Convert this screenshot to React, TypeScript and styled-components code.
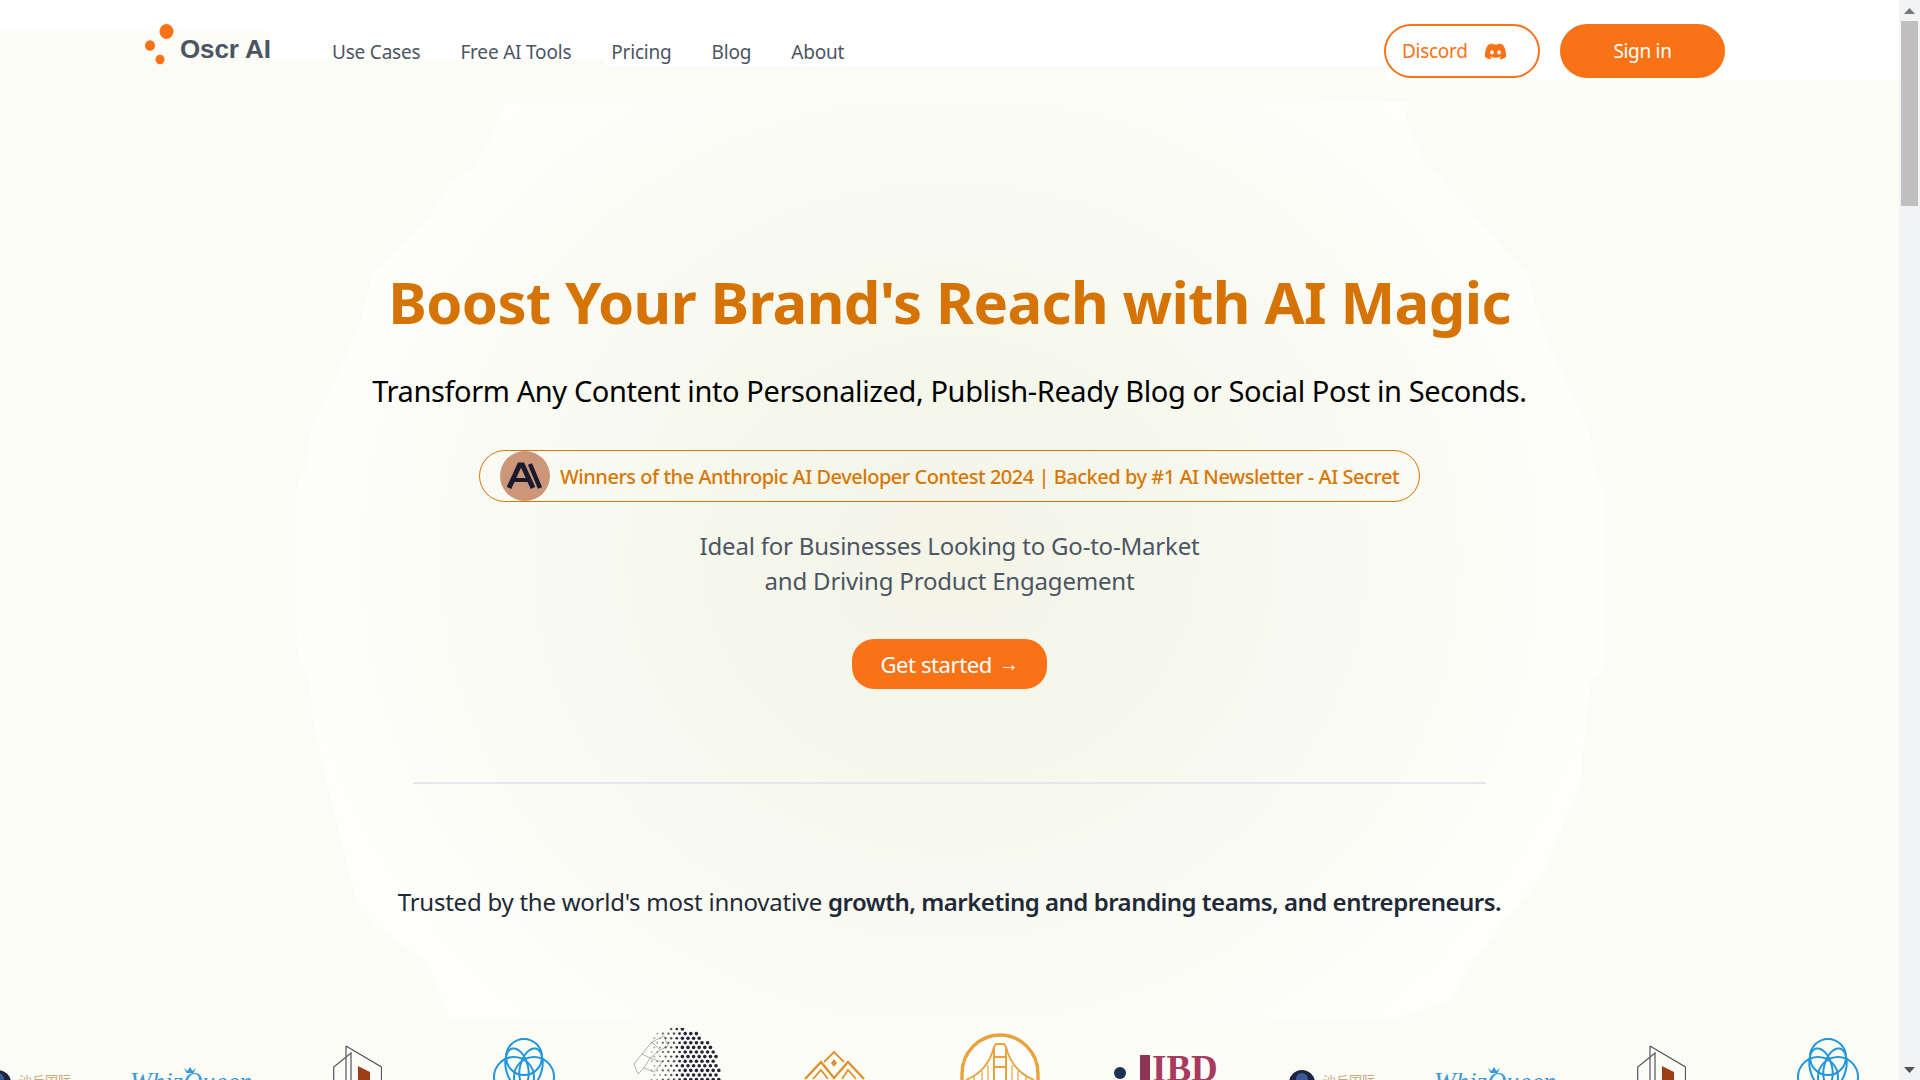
import React from "react";
import styled, { createGlobalStyle } from "styled-components";
import { FaDiscord } from "react-icons/fa";

const GlobalStyle = createGlobalStyle`
  html, body {
    margin: 0;
    padding: 0;
    height: 100%;
    overflow: hidden;
    background: #fbfcf5;
  }
  * {
    box-sizing: border-box;
  }
`;

const orange = "#f97316";
const amber = "#d97706";
const sans = `"Noto Sans", "Open Sans", sans-serif`;

const Shell = styled.div`
  display: flex;
  width: 100%;
  height: 100vh;
  font-family: ${sans};
`;

const Main = styled.main`
  position: relative;
  flex: 1;
  min-width: 0;
  overflow: hidden;
  background: #fbfcf5;
`;

const HeaderBackdrop = styled.div`
  position: absolute;
  top: 0;
  left: 0;
  width: 100%;
  height: 80px;
  background: #fff;
  clip-path: polygon(
    0 0, 100% 0, 100% 80px, 1385px 80px, 1385px 66px, 605px 66px,
    605px 60px, 270px 60px, 270px 31px, 0 31px
  );
`;

const Glow = styled.div`
  position: absolute;
  top: 0;
  left: 0;
  width: 100%;
  height: 1080px;
  background: radial-gradient(ellipse 660px 600px at 950px 560px, #f4f5e7 0%, #f7f8ee 45%, #fbfcf6 80%, #fefefb 100%);
  clip-path: polygon(
    505px 103px, 1409px 102px, 1405px 117px, 1424px 163px, 1435px 173px, 1478px 220px,
    1528px 275px, 1542px 330px, 1590px 433px, 1593px 467px, 1604px 490px, 1604px 667px,
    1590px 683px, 1580px 784px, 1542px 877px, 1518px 905px, 1473px 962px, 1450px 1000px,
    1396px 1019px, 450px 1019px, 427px 962px, 377px 927px, 358px 905px, 350px 877px,
    313px 723px, 310px 683px, 297px 653px, 297px 483px, 307px 467px, 310px 433px,
    358px 330px, 372px 275px, 430px 217px, 450px 183px, 475px 167px, 490px 140px
  );
`;

const Header = styled.header`
  position: relative;
  display: flex;
  align-items: center;
  padding: 24px 174px 0 145px;
`;

const Brand = styled.div`
  align-self: flex-start;
  display: flex;
  align-items: center;
  gap: 5px;
  width: 187px;
  font-family: "Liberation Sans", Arial, sans-serif;
  font-size: 26px;
  font-weight: 700;
  color: #4b5563;
`;

const BrandName = styled.span`
  margin-top: 10px;
  letter-spacing: -0.1px;
`;

const Nav = styled.nav`
  display: flex;
  align-items: center;
  gap: 40px;
  flex: 1;
  height: 54px;
`;

const NavLink = styled.a`
  margin-top: 2px;
  font-size: 19px;
  line-height: 26px;
  color: #4b5563;
  letter-spacing: -0.2px;
`;

const Pill = styled.a<{ $solid?: boolean }>`
  display: flex;
  align-items: center;
  justify-content: ${(p) => (p.$solid ? "center" : "flex-start")};
  gap: 16px;
  height: 54px;
  width: ${(p) => (p.$solid ? "165px" : "156px")};
  margin-left: ${(p) => (p.$solid ? "20px" : "0")};
  padding-left: ${(p) => (p.$solid ? "0" : "16px")};
  border-radius: 27px;
  border: 2px solid ${orange};
  background: ${(p) => (p.$solid ? orange : "#fff")};
  color: ${(p) => (p.$solid ? "#fff" : orange)};
  font-size: 19px;
  letter-spacing: -0.3px;
`;

const Hero = styled.section`
  position: relative;
  display: flex;
  flex-direction: column;
  align-items: center;
  padding-top: 184px;
`;

const Title = styled.h1`
  margin: 0;
  font-size: 58px;
  line-height: 80px;
  font-weight: 700;
  color: #d57404;
  letter-spacing: -0.6px;
`;

const Subtitle = styled.p`
  margin: 29px 0 0;
  font-size: 29px;
  line-height: 40px;
  color: #000;
  letter-spacing: -0.39px;
`;

const Badge = styled.div`
  display: flex;
  align-items: center;
  gap: 10px;
  width: 941px;
  height: 52px;
  margin-top: 39px;
  padding-left: 20px;
  border: 1px solid ${amber};
  border-radius: 26px;
  font-size: 20px;
  font-weight: 500;
  color: ${amber};
  letter-spacing: -0.48px;
`;

const Avatar = styled.div`
  flex: none;
  display: flex;
  align-items: center;
  justify-content: center;
  width: 50px;
  height: 50px;
  border-radius: 50%;
  background: #cc9679;
`;

const Lead = styled.p`
  margin: 26px 0 0;
  font-size: 24px;
  line-height: 35px;
  text-align: center;
  color: #4b5563;
  letter-spacing: -0.2px;
`;

const Cta = styled.a`
  display: flex;
  align-items: center;
  justify-content: center;
  gap: 7px;
  width: 195px;
  height: 50px;
  margin-top: 41px;
  border-radius: 22px;
  background: ${orange};
  color: #fff;
  font-size: 22px;
  letter-spacing: -0.4px;
`;

const CtaArrow = styled.span`
  font-family: "Liberation Sans", Arial, sans-serif;
  font-size: 20px;
`;

const Divider = styled.hr`
  width: 1073px;
  height: 2px;
  margin: 93px 0 0;
  border: 0;
  background: #e5e7eb;
`;

const Trusted = styled.p`
  margin: 98px 0 0;
  font-size: 24px;
  line-height: 40px;
  color: #1f2937;
  letter-spacing: -0.25px;

  strong {
    font-weight: 600;
    letter-spacing: -0.5px;
  }
`;

const LogoTrack = styled.div`
  position: absolute;
  top: 1028px;
  left: -15px;
  display: flex;
  align-items: flex-start;
  width: 2700px;
`;

const LogoSlot = styled.div<{ $gap: number; $top: number; $width: number }>`
  flex: none;
  position: relative;
  width: ${(p) => p.$width}px;
  margin-left: ${(p) => p.$gap}px;
  margin-top: ${(p) => p.$top}px;
`;

const Wordmark = styled.div`
  display: flex;
  align-items: flex-start;
  gap: 8px;
  padding-top: 14px;
  font-family: "Noto Sans CJK SC", sans-serif;
  font-size: 13px;
  line-height: 20px;
  color: #c9a97a;
`;

const QueenText = styled.div`
  margin-top: 6px;
  font-family: "Liberation Serif", serif;
  font-style: italic;
  font-size: 26px;
  line-height: 30px;
  letter-spacing: 0.3px;
  color: #3a9ad9;
`;

const Crown = styled.svg`
  position: absolute;
  top: 6px;
  left: 53px;
`;

const IbdRow = styled.div`
  display: flex;
  align-items: flex-start;
`;

const IbdDot = styled.span`
  flex: none;
  width: 12px;
  height: 12px;
  margin: 12px 14px 0 0;
  border-radius: 50%;
  background: #1f3058;
`;

const IbdBar = styled.span`
  flex: none;
  width: 10px;
  height: 34px;
  background: #8c3556;
`;

const IbdText = styled.span`
  margin: -6px 0 0 2px;
  font-family: "Liberation Serif", serif;
  font-weight: 700;
  font-size: 37px;
  line-height: 40px;
  color: #a63a5f;
`;

const Rail = styled.div`
  flex: none;
  display: flex;
  flex-direction: column;
  align-items: center;
  width: 21px;
  height: 100%;
  background: #f1f3f4;
`;

const RailButton = styled.div`
  flex: none;
  display: flex;
  align-items: center;
  justify-content: center;
  width: 100%;
  height: 21px;
`;

const RailThumb = styled.div`
  flex: none;
  width: 17px;
  height: 185px;
  background: #c1bebf;
`;

const RailSpace = styled.div`
  flex: 1;
`;

const LogoMark = () => (
  <svg width="30" height="41" viewBox="0 0 30 41">
    <ellipse cx="21.5" cy="7.5" rx="7" ry="7.5" fill={orange} />
    <ellipse cx="5" cy="21.5" rx="5" ry="5.3" fill={orange} />
    <ellipse cx="15" cy="35.5" rx="4.5" ry="4.8" fill={orange} />
  </svg>
);

const AnthropicMark = () => (
  <svg width="36" height="28" viewBox="0 0 36 28">
    <path d="M2 26 L12.5 3 H15.5 L26 26" fill="none" stroke="#1a1a2e" strokeWidth="5" />
    <path d="M7 18 H21" stroke="#1a1a2e" strokeWidth="4" />
    <path d="M23 2 L33 26" stroke="#1a1a2e" strokeWidth="4.5" />
  </svg>
);

const SandLogo = () => (
  <Wordmark>
    <svg width="26" height="26" viewBox="0 0 26 26">
      <circle cx="13" cy="13" r="13" fill="#1b2440" />
      <circle cx="13" cy="9" r="6" fill="#3b5b94" />
    </svg>
    <span>沙丘国际</span>
  </Wordmark>
);

const QueenLogo = () => (
  <>
    <Crown width="14" height="8" viewBox="0 0 14 8">
      <path d="M1 1 L3.5 6 H10.5 L13 1 L9.5 4 L7 0 L4.5 4 Z" fill="#3a9ad9" />
    </Crown>
    <QueenText>WhizQueen</QueenText>
  </>
);

const BuildingLogo = () => (
  <svg width="49" height="40" viewBox="0 0 49 40">
    <path d="M25 21 L37 27 V40 H25 Z" fill="#9c3f17" />
    <path d="M13 1 L48.5 22 V40 M0.7 40 V22 L18 8 V40 M13 1 V40" fill="none" stroke="#55555f" strokeWidth="1.2" />
  </svg>
);

const RingsLogo = () => (
  <svg width="62" height="44" viewBox="0 0 62 44" fill="none" stroke="#2196dc" strokeWidth="2">
    <circle cx="31" cy="19" r="18" />
    <circle cx="21" cy="39" r="20" />
    <circle cx="41" cy="39" r="20" />
    <ellipse cx="24" cy="30" rx="11" ry="20" transform="rotate(-14 24 30)" />
    <ellipse cx="38" cy="30" rx="11" ry="20" transform="rotate(14 38 30)" />
  </svg>
);

const BrainLogo = () => {
  const dots: React.ReactNode[] = [];
  for (let row = 0; row < 12; row++) {
    for (let col = 0; col < 17; col++) {
      const x = col * 5.6 + (row % 2 ? 2.8 : 0);
      const y = row * 4.6 + 1;
      if (Math.hypot(x - 44, y - 44) > 44) continue;
      const t = x / 88;
      if (t < 0.22) continue;
      dots.push(
        <circle
          key={`${row}-${col}`}
          cx={x}
          cy={y}
          r={t > 0.55 ? 1.8 : 0.5 + t * 1.6}
          fill={t > 0.5 ? "#23233a" : t > 0.35 ? "#55555f" : "#9a9aa3"}
        />
      );
    }
  }
  return (
    <svg width="90" height="52" viewBox="0 0 90 52">
      <path
        d="M2 36 L10 26 L18 30 L12 40 L22 44 L30 34 L18 30 M10 26 L20 14 L28 22 L18 30 M20 14 L32 8 L36 18 L28 22 M2 36 L6 46 L12 40"
        fill="none"
        stroke="#a8a8b0"
        strokeWidth="0.9"
      />
      {dots}
    </svg>
  );
};

const EagleLogo = () => (
  <svg width="62" height="30" viewBox="0 0 62 30" fill="none" stroke="#e0912f" strokeWidth="2.4">
    <path d="M1 29 L17 12 L30 28 L44 12 L60 29" />
    <path d="M9 29 L17 20 L24 29 M38 29 L44 20 L52 29" strokeWidth="1.8" />
    <path d="M20 12 L30 2 L40 12" strokeWidth="1.8" />
    <path d="M30 9 L33 13 L30 17 L27 13 Z" fill="#e0912f" stroke="none" />
  </svg>
);

const GateLogo = () => (
  <svg width="80" height="48" viewBox="0 0 80 48" fill="none" stroke="#e8a33d">
    <path d="M2 47 V41 A38 39 0 0 1 78 41 V47" fill="#fff" strokeWidth="3.4" />
    <path d="M34 47 V14 M46 47 V14 M34 14 L36 11 H44 L46 14 M34 24 H46 M34 34 H46" strokeWidth="2" />
    <path d="M34 14 Q28 38 6 47 M46 14 Q52 38 74 47" strokeWidth="1.8" />
    <path d="M14 47 V43 M22 47 V38 M28 47 V32 M52 47 V32 M58 47 V38 M66 47 V43" strokeWidth="1.2" />
  </svg>
);

const IbdLogo = () => (
  <IbdRow>
    <IbdDot />
    <IbdBar />
    <IbdText>IBD</IbdText>
  </IbdRow>
);

const logos = [
  { gap: 0, top: 28, width: 86, Mark: SandLogo },
  { gap: 59, top: 33, width: 118, Mark: QueenLogo },
  { gap: 85, top: 17, width: 49, Mark: BuildingLogo },
  { gap: 111, top: 10, width: 61, Mark: RingsLogo },
  { gap: 78, top: 0, width: 89, Mark: BrainLogo },
  { gap: 83, top: 22, width: 61, Mark: EagleLogo },
  { gap: 95, top: 5, width: 79, Mark: GateLogo },
  { gap: 75, top: 27, width: 104, Mark: IbdLogo },
];

const navItems = ["Use Cases", "Free AI Tools", "Pricing", "Blog", "About"];

const App = () => {
  return (
    <Shell>
      <GlobalStyle />
      <Main>
        <HeaderBackdrop />
        <Glow />
        <Header>
          <Brand>
            <LogoMark />
            <BrandName>Oscr AI</BrandName>
          </Brand>
          <Nav>
            {navItems.map((item) => (
              <NavLink key={item}>{item}</NavLink>
            ))}
          </Nav>
          <Pill>
            Discord
            <FaDiscord size={23} />
          </Pill>
          <Pill $solid>Sign in</Pill>
        </Header>
        <Hero>
          <Title>Boost Your Brand's Reach with AI Magic</Title>
          <Subtitle>Transform Any Content into Personalized, Publish-Ready Blog or Social Post in Seconds.</Subtitle>
          <Badge>
            <Avatar>
              <AnthropicMark />
            </Avatar>
            Winners of the Anthropic AI Developer Contest 2024 | Backed by #1 AI Newsletter - AI Secret
          </Badge>
          <Lead>
            Ideal for Businesses Looking to Go-to-Market
            <br />
            and Driving Product Engagement
          </Lead>
          <Cta>
            Get started <CtaArrow>→</CtaArrow>
          </Cta>
          <Divider />
          <Trusted>
            Trusted by the world's most innovative <strong>growth, marketing and branding teams, and entrepreneurs.</strong>
          </Trusted>
        </Hero>
        <LogoTrack>
          {[...logos, ...logos].map(({ gap, top, width, Mark }, i) => (
            <LogoSlot key={i} $gap={i === 8 ? 71 : gap} $top={top} $width={width}>
              <Mark />
            </LogoSlot>
          ))}
        </LogoTrack>
      </Main>
      <Rail>
        <RailButton>
          <svg width="11" height="6" viewBox="0 0 11 6">
            <path d="M5.5 0 L11 6 H0 Z" fill="#777" />
          </svg>
        </RailButton>
        <RailThumb />
        <RailSpace />
        <RailButton>
          <svg width="11" height="6" viewBox="0 0 11 6">
            <path d="M0 0 H11 L5.5 6 Z" fill="#555" />
          </svg>
        </RailButton>
      </Rail>
    </Shell>
  );
};

export default App;
